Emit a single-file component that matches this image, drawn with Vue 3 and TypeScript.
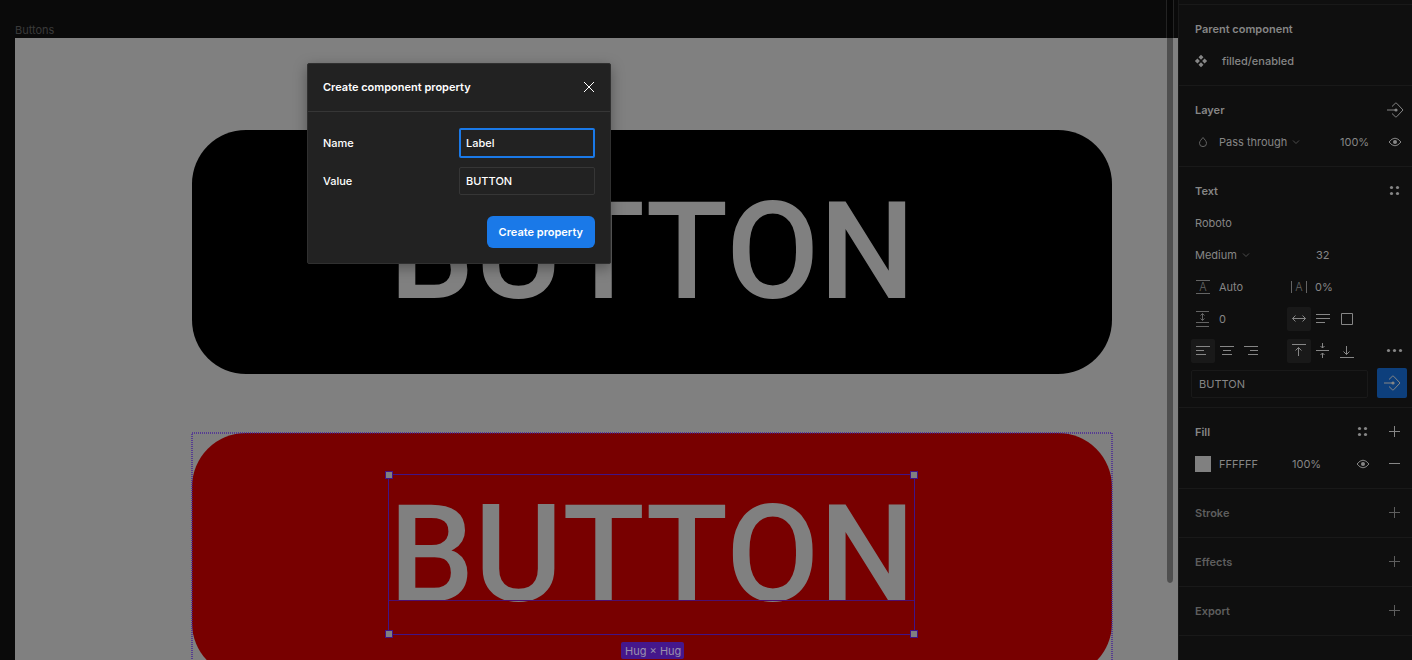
<script setup lang="ts">
import { ref } from 'vue'

const propertyName = ref('Label')
const propertyValue = ref('BUTTON')
const textContent = ref('BUTTON')
const emptySections = ['Stroke', 'Effects', 'Export']
</script>

<template>
  <div class="editor">
    <main class="canvas">
      <span class="frame-name">Buttons</span>
      <div class="frame"></div>
      <div class="shape black"><span>BUTTON</span></div>
      <div class="shape red"><span>BUTTON</span></div>
      <svg class="instance-outline"><rect x="1" y="1" width="920" height="244" /></svg>
      <div class="selection">
        <i class="handle tl"></i><i class="handle tr"></i>
        <i class="handle bl"></i><i class="handle br"></i>
        <i class="baseline"></i>
      </div>
      <span class="size-badge">Hug × Hug</span>
      <div class="scroll-thumb"></div>
    </main>

    <aside class="panel">
      <div class="panel-top"></div>

      <section>
        <div class="row"><h2>Parent component</h2></div>
        <div class="row">
          <svg class="icon" viewBox="0 0 24 24">
            <path class="solid" d="M10 5.800l2.500 2.500L10 10.800 7.500 8.300zM6.400 9.500l2.500 2.500-2.500 2.500L3.900 12zM13.600 9.500l2.500 2.500-2.500 2.500-2.500-2.500zM10 13.200l2.500 2.500L10 18.200l-2.500-2.500z" />
          </svg>
          <span class="component-name">filled/enabled</span>
        </div>
      </section>

      <section>
        <div class="row">
          <h2>Layer</h2>
          <button class="tool end" aria-label="Apply variable">
            <svg class="icon" viewBox="0 0 24 24">
              <path d="M4 12h9M9 8.500L12.300 5.300q.7-.6 1.400 0L20 12l-6.300 6.700q-.7.6-1.400 0L9 15.500" />
              <circle class="solid" cx="13" cy="12" r="1.600" />
            </svg>
          </button>
        </div>
        <div class="row">
          <svg class="icon dim" viewBox="0 0 24 24"><path d="M12 7.500C10.500 9.500 8.500 11 8.500 13.300a3.500 3.300 0 0 0 7 0C15.500 11 13.500 9.500 12 7.500z" /></svg>
          <button class="text-button blend">Pass through<svg class="chevron" viewBox="0 0 8 8"><path d="M1 2.500l3 3 3-3" /></svg></button>
          <span class="layer-opacity">100%</span>
          <button class="tool end" aria-label="Toggle layer visibility">
            <svg class="icon" viewBox="0 0 24 24">
              <path d="M6 12q6-7.600 12 0q-6 7.600-12 0z" /><circle class="solid" cx="12" cy="12" r="2" />
            </svg>
          </button>
        </div>
      </section>

      <section>
        <div class="row">
          <h2>Text</h2>
          <button class="tool end" aria-label="Text styles">
            <svg class="icon" viewBox="0 0 24 24"><g class="solid"><circle cx="8.500" cy="8.500" r="1.600" /><circle cx="14.500" cy="8.500" r="1.600" /><circle cx="8.500" cy="14.500" r="1.600" /><circle cx="14.500" cy="14.500" r="1.600" /></g></svg>
          </button>
        </div>
        <div class="row"><button class="text-button lead">Roboto</button></div>
        <div class="row cols">
          <button class="text-button lead">Medium<svg class="chevron" viewBox="0 0 8 8"><path d="M1 2.500l3 3 3-3" /></svg></button>
          <span class="font-size">32</span>
        </div>
        <div class="row cols">
          <div class="field">
            <svg class="icon dim" viewBox="0 0 24 24"><path d="M5 5.500h14M5 18.500h14" /><text x="12" y="16" text-anchor="middle">A</text></svg>
            <span class="gap">Auto</span>
          </div>
          <div class="field">
            <svg class="icon dim" viewBox="0 0 24 24"><path d="M4.500 6v12M19.500 6v12" /><text x="12" y="16" text-anchor="middle">A</text></svg>
            <span class="gap">0%</span>
          </div>
        </div>
        <div class="row cols">
          <div class="field">
            <svg class="icon dim" viewBox="0 0 24 24"><path d="M5 4.500h13M5 15.500h13M5 19.500h13M11.500 6.500v7M9.500 8.500l2-2 2 2M9.500 11.500l2 2 2-2" /></svg>
            <span class="gap">0</span>
          </div>
          <div class="field">
            <button class="tool on" aria-label="Auto width"><svg class="icon" viewBox="0 0 24 24"><path d="M5.500 11.500h13M8.500 8.500l-3 3 3 3M15.500 8.500l3 3-3 3" /></svg></button>
            <button class="tool" aria-label="Auto height"><svg class="icon" viewBox="0 0 24 24"><path d="M5 7.500h14M5 11.500h14M5 15.500h9" /></svg></button>
            <button class="tool" aria-label="Fixed size"><svg class="icon" viewBox="0 0 24 24"><path d="M6.500 6.500h11v11h-11z" /></svg></button>
          </div>
        </div>
        <div class="row cols">
          <div class="field">
            <button class="tool on" aria-label="Align left"><svg class="icon" viewBox="0 0 24 24"><path d="M5 7.500h14M5 11.500h8M5 15.500h10" /></svg></button>
            <button class="tool" aria-label="Align center"><svg class="icon" viewBox="0 0 24 24"><path d="M5 7.500h14M8 11.500h8M7 15.500h10" /></svg></button>
            <button class="tool" aria-label="Align right"><svg class="icon" viewBox="0 0 24 24"><path d="M5 7.500h14M11 11.500h8M9 15.500h10" /></svg></button>
          </div>
          <div class="field">
            <button class="tool on" aria-label="Align top"><svg class="icon" viewBox="0 0 24 24"><path d="M5 5.500h14M11.500 17V8.500M8.500 11.500l3-3 3 3" /></svg></button>
            <button class="tool" aria-label="Align middle"><svg class="icon" viewBox="0 0 24 24"><path d="M5 11.500h13M11.500 4v5M9.500 7l2 2 2-2M11.500 19v-5M9.500 16l2-2 2 2" /></svg></button>
            <button class="tool" aria-label="Align bottom"><svg class="icon" viewBox="0 0 24 24"><path d="M5 18.500h14M11.500 7v8.500M8.500 12.500l3 3 3-3" /></svg></button>
          </div>
          <button class="tool end" aria-label="Type details"><svg class="icon" viewBox="0 0 24 24"><g class="solid"><circle cx="5.500" cy="11.500" r="1.600" /><circle cx="11.500" cy="11.500" r="1.600" /><circle cx="17.500" cy="11.500" r="1.600" /></g></svg></button>
        </div>
        <div class="row content-row">
          <input v-model="textContent" class="content-input" aria-label="Text content" />
          <button class="apply" aria-label="Create text property">
            <svg class="icon" viewBox="0 0 24 24">
              <path d="M4 12h9M9 8.500L12.300 5.300q.7-.6 1.400 0L20 12l-6.300 6.700q-.7.6-1.400 0L9 15.500" />
              <circle class="solid" cx="13" cy="12" r="1.600" />
            </svg>
          </button>
        </div>
      </section>

      <section>
        <div class="row">
          <h2>Fill</h2>
          <button class="tool end" aria-label="Fill styles">
            <svg class="icon" viewBox="0 0 24 24"><g class="solid"><circle cx="8.500" cy="8.500" r="1.600" /><circle cx="14.500" cy="8.500" r="1.600" /><circle cx="8.500" cy="14.500" r="1.600" /><circle cx="14.500" cy="14.500" r="1.600" /></g></svg>
          </button>
          <button class="tool after" aria-label="Add fill"><svg class="icon" viewBox="0 0 24 24"><path d="M6 11.500h11M11.500 6v11" /></svg></button>
        </div>
        <div class="row">
          <span class="swatch"></span>
          <span class="hex">FFFFFF</span>
          <span>100%</span>
          <button class="tool end" aria-label="Toggle fill visibility">
            <svg class="icon" viewBox="0 0 24 24"><path d="M6 12q6-7.600 12 0q-6 7.600-12 0z" /><circle class="solid" cx="12" cy="12" r="2" /></svg>
          </button>
          <button class="tool after" aria-label="Remove fill"><svg class="icon" viewBox="0 0 24 24"><path d="M6 11.500h11" /></svg></button>
        </div>
      </section>

      <section v-for="name in emptySections" :key="name" class="empty">
        <div class="row">
          <h2>{{ name }}</h2>
          <button class="tool end" :aria-label="`Add ${name}`"><svg class="icon" viewBox="0 0 24 24"><path d="M6 11.500h11M11.500 6v11" /></svg></button>
        </div>
      </section>
    </aside>

    <form class="dialog" role="dialog" aria-labelledby="dialog-title" @submit.prevent>
      <header>
        <h1 id="dialog-title">Create component property</h1>
        <button type="button" class="close" aria-label="Close"><svg viewBox="0 0 12 12"><path d="M1 1l10 10M11 1L1 11" /></svg></button>
      </header>
      <div class="dialog-body">
        <div class="dialog-row">
          <label for="property-name">Name</label>
          <input id="property-name" v-model="propertyName" class="focused" />
        </div>
        <div class="dialog-row">
          <label for="property-value">Value</label>
          <input id="property-value" v-model="propertyValue" />
        </div>
        <button type="submit" class="submit">Create property</button>
      </div>
    </form>
  </div>
</template>

<style>
body {
  background: #0a0a0a;
}
</style>

<style scoped>
.editor {
  position: relative;
  display: flex;
  height: 100vh;
  overflow: hidden;
  background: #0a0a0a;
  color: #868686;
  font-family: Inter, "Liberation Sans", sans-serif;
  font-size: 11px;
  line-height: 16px;
}
.editor * {
  box-sizing: border-box;
}
button,
input {
  margin: 0;
  padding: 0;
  border: 0;
  background: none;
  color: inherit;
  font: inherit;
  outline: none;
}
h1,
h2 {
  margin: 0;
  font-size: 11px;
  font-weight: 600;
}

/* Canvas */
.canvas {
  position: relative;
  flex: 1;
  min-width: 0;
  overflow: hidden;
}
.frame-name {
  position: absolute;
  left: 15px;
  top: 22px;
  color: #3a3a3a;
}
.frame {
  position: absolute;
  left: 15px;
  top: 38px;
  right: 0;
  bottom: 0;
  background: #808080;
}
.shape {
  position: absolute;
  left: 192px;
  width: 920px;
  height: 244px;
  border-radius: 54px;
  display: flex;
  align-items: center;
  justify-content: center;
  color: #808080;
  font-family: Roboto, sans-serif;
  font-size: 135px;
  font-weight: 500;
  line-height: 160px;
}
.black {
  top: 130px;
  background: #000;
}
.red {
  top: 433px;
  background: #780000;
}
.instance-outline {
  position: absolute;
  left: 191px;
  top: 432px;
  width: 922px;
  height: 246px;
  fill: none;
  stroke: #45209a;
  stroke-width: 2;
  stroke-dasharray: 1 1;
  opacity: 0.7;
}
.selection {
  position: absolute;
  left: 388px;
  top: 474px;
  width: 527px;
  height: 161px;
  border: 1px solid #401488;
}
.handle {
  position: absolute;
  width: 8px;
  height: 8px;
  border: 1px solid #401488;
  background: #808080;
}
.tl { left: -4px; top: -4px; }
.tr { right: -4px; top: -4px; }
.bl { left: -4px; bottom: -4px; }
.br { right: -4px; bottom: -4px; }
.baseline {
  position: absolute;
  left: 0;
  right: 0;
  top: 125px;
  height: 1px;
  background: #4d0e70;
}
.size-badge {
  position: absolute;
  left: 621px;
  top: 642px;
  padding: 1px 3px 0 4px;
  border-radius: 2px;
  background: #45178c;
  color: #9a90ac;
  line-height: 16px;
}
.scroll-thumb {
  position: absolute;
  top: 0;
  right: 4px;
  width: 8px;
  height: 583px;
  border: solid rgba(128, 128, 128, 0.22);
  border-width: 0 1px;
  border-radius: 0 0 4px 4px;
  background: rgba(0, 0, 0, 0.38);
  background-clip: padding-box;
}

/* Properties panel */
.panel {
  width: 234px;
  border-left: 1px solid #191919;
  background: #0f0f0f;
}
.panel-top {
  height: 5px;
  border-bottom: 1px solid #191919;
}
section {
  padding: 8px 5px 8px 12px;
  border-bottom: 1px solid #191919;
}
section .row {
  display: flex;
  align-items: center;
  height: 32px;
}
section .cols {
  display: grid;
  grid-template-columns: 96px 96px 1fr;
}
section .content-row {
  align-items: flex-end;
  padding-bottom: 1px;
}
h2 {
  padding-left: 4px;
}
.empty {
  color: #5e5e5e;
}
.icon {
  display: block;
  flex: none;
  width: 24px;
  height: 24px;
  fill: none;
  stroke: currentColor;
  stroke-width: 1;
}
.icon .solid {
  fill: currentColor;
  stroke: none;
}
.icon text {
  fill: currentColor;
  stroke: none;
  font-size: 11px;
  font-weight: 300;
}
.dim {
  color: #646464;
}
.component-name {
  margin-left: 7px;
  font-weight: 500;
}
.tool {
  flex: none;
  width: 24px;
  height: 24px;
  border-radius: 2px;
}
.tool.on {
  background: #191919;
}
.end {
  margin-left: auto;
}
.after {
  margin-left: 8px;
}
.field {
  display: flex;
  align-items: center;
}
.gap {
  margin-left: 4px;
}
.text-button {
  display: flex;
  align-items: center;
}
.lead {
  padding-left: 4px;
}
.blend {
  width: 121px;
  margin-left: 4px;
}
.chevron {
  width: 8px;
  height: 8px;
  margin-left: 5px;
  fill: none;
  stroke: #4c4c4c;
}
.font-size {
  padding-left: 29px;
}
.content-input {
  flex: 1;
  min-width: 0;
  height: 28px;
  padding: 0 7px;
  border: 1px solid #191919;
  border-radius: 2px;
}
.apply {
  display: flex;
  align-items: center;
  justify-content: center;
  width: 30px;
  height: 30px;
  margin-left: 9px;
  border-radius: 2px;
  background: #0d3f7c;
}
.swatch {
  width: 16px;
  height: 16px;
  margin-left: 4px;
  background: #808080;
}
.hex {
  width: 73px;
  margin-left: 8px;
}

/* Dialog */
.dialog {
  position: absolute;
  left: 307px;
  top: 63px;
  width: 304px;
  border: 1px solid #303030;
  border-radius: 2px;
  background: #222;
  color: #fff;
  box-shadow: 0 4px 14px rgba(0, 0, 0, 0.35);
}
.dialog header {
  display: flex;
  align-items: center;
  justify-content: space-between;
  height: 48px;
  padding: 0 15px 2px;
  border-bottom: 1px solid #363636;
}
.close {
  width: 12px;
  height: 12px;
}
.close svg {
  display: block;
  fill: none;
  stroke: #fff;
}
.dialog-body {
  display: flex;
  flex-direction: column;
  padding: 12px 15px 15px;
}
.dialog-row {
  display: flex;
  align-items: center;
  justify-content: space-between;
  height: 38px;
  font-weight: 500;
}
.dialog-row input {
  width: 136px;
  height: 28px;
  padding: 0 6px;
  border: 1px solid #363636;
  border-radius: 2px;
}
.dialog-row .focused {
  height: 30px;
  padding: 0 5px;
  border: 2px solid #1a79e8;
}
.submit {
  align-self: flex-end;
  height: 32px;
  margin-top: 16px;
  padding: 0 12px;
  border-radius: 6px;
  background: #1a79e8;
  font-weight: 600;
}
</style>
